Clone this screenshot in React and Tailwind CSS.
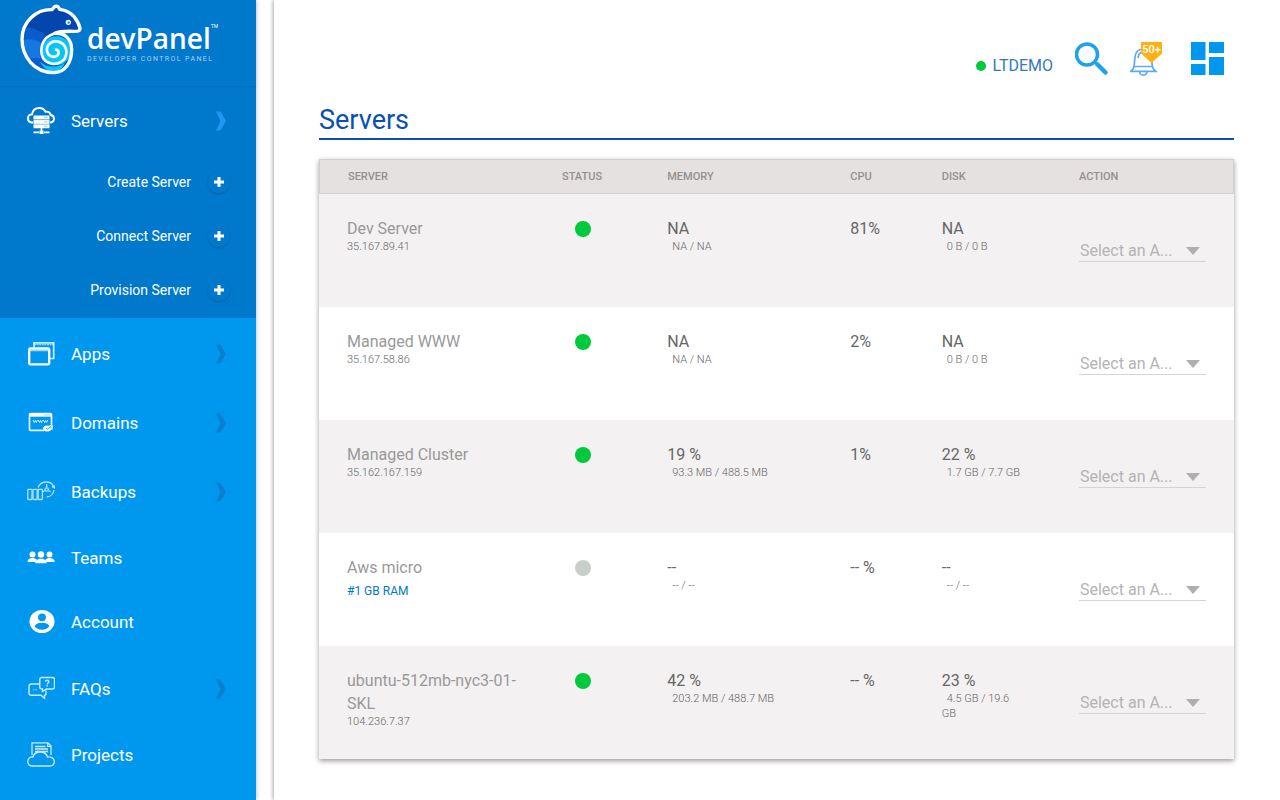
import React from "react";

const servers = [
  { name: "Dev Server", ip: "35.167.89.41", up: true, memory: "NA", memoryDetail: "NA / NA", cpu: "81%", disk: "NA", diskDetail: "0 B / 0 B" },
  { name: "Managed WWW", ip: "35.167.58.86", up: true, memory: "NA", memoryDetail: "NA / NA", cpu: "2%", disk: "NA", diskDetail: "0 B / 0 B" },
  { name: "Managed Cluster", ip: "35.162.167.159", up: true, memory: "19 %", memoryDetail: "93.3 MB / 488.5 MB", cpu: "1%", disk: "22 %", diskDetail: "1.7 GB / 7.7 GB" },
  { name: "Aws micro", plan: "#1 GB RAM", up: false, memory: "--", memoryDetail: "-- / --", cpu: "-- %", disk: "--", diskDetail: "-- / --" },
  { name: "ubuntu-512mb-nyc3-01-SKL", ip: "104.236.7.37", up: true, memory: "42 %", memoryDetail: "203.2 MB / 488.7 MB", cpu: "-- %", disk: "23 %", diskDetail: "4.5 GB / 19.6 GB" },
];

function Icon({ children }) {
  return (
    <svg viewBox="0 0 28 28" className="h-7 w-7 shrink-0" fill="none" stroke="white" aria-hidden="true">
      {children}
    </svg>
  );
}

const ServersIcon = () => (
  <Icon>
    <path d="M6 15.500H4.500C2 15 .8 13 1 11c.3-2.200 2-3.600 4-3.600C5.600 3.500 8.500 1 12.300 1c3 0 5 1.500 6.200 3.700 2.700-.4 4.700 1 5.200 3.300 2.300.5 3.500 2 3.300 4.200-.2 2-1.800 3.300-4 3.300" strokeWidth="1.900" />
    <path d="M6.500 8.500h16v4h-16zM6.500 12.900h16v4h-16zM6.500 17.300h16v4h-16z" fill="white" stroke="none" />
    <path d="M6.500 12.700h16M6.500 17.100h16" stroke="#7dbcea" strokeWidth=".6" />
    <path d="M17 10.500h3.500M17 14.900h3.500M17 19.300h3.500" stroke="#9ccdf0" />
    <path d="M14.500 21v4M6.500 25.300h5.500M17 25.300h5.500" strokeWidth="1.700" />
    <path d="M12.500 23.500h4V27h-4z" fill="white" stroke="none" />
  </Icon>
);

const AppsIcon = () => (
  <Icon>
    <path d="M7 7V2.800h19.700v15.700H22" strokeWidth="1.700" opacity=".8" />
    <path d="M7 4.600h19" strokeWidth="1.200" strokeDasharray="2 .6" opacity=".6" />
    <rect x="2.200" y="8.500" width="20" height="15.800" rx="1" strokeWidth="2.300" />
    <path d="M3 10.500h18.500" strokeWidth="1.500" opacity=".6" />
  </Icon>
);

const DomainsIcon = () => (
  <Icon>
    <path d="M17 21.300H3.500a1 1 0 0 1-1-1V5.500a1 1 0 0 1 1-1h20a1 1 0 0 1 1 1V16" strokeWidth="1.700" opacity=".9" />
    <path d="M2.500 4.300h22v3.400h-22z" fill="white" stroke="none" />
    <path d="M17.500 6h5.500" stroke="#5fbdf5" strokeDasharray="1.300 .6" />
    <path d="m6 11 1.200 2.500 1-2 1 2 1.200-2.500m.8 0 1.200 2.500 1-2 1 2 1.200-2.500m.8 0 1.200 2.500 1-2 1 2 1.200-2.500" strokeWidth=".9" opacity=".85" />
    <ellipse cx="20" cy="19.500" rx="3.800" ry="3" fill="white" stroke="none" />
    <path d="m20 18.500 4.500-2M21 21.800l4-2 .3-3.500" strokeWidth="1.500" opacity=".9" />
    <path d="m18.900 19 1.500 1.200 3-2.500" stroke="#0098ee" strokeWidth=".9" />
  </Icon>
);

const BackupsIcon = () => (
  <Icon>
    <g strokeWidth="1.300" opacity=".7">
      <rect x=".8" y="11.300" width="4.200" height="10.200" rx=".5" />
      <rect x="6" y="11.300" width="4.200" height="10.200" rx=".5" />
      <rect x="11.200" y="11.300" width="4.200" height="10.200" rx=".5" />
      <path d="M11 9.500C12.500 6 15.500 4 19.300 4c3.700 0 6.700 2.200 7.600 5.500M27 12c-.8 4.300-3.500 6.700-7.300 7M25 8.500l2.300 1.500.5-2.700" />
      <circle cx="19.700" cy="11.500" r="1.700" />
      <path d="M19.700 6v3.500M18 12.500l-2.500 1.500M21.500 12.500l2 1.500" />
    </g>
  </Icon>
);

const TeamsIcon = () => (
  <Icon>
    <g fill="white" stroke="none">
      <circle cx="5.500" cy="10.500" r="3" />
      <circle cx="22.500" cy="10.500" r="3" />
      <path d="M.5 18c0-2.500 2-4 5-4 2 0 3.300.6 4.200 1.800L8.500 18zM27.700 18c0-2.500-2-4-5-4-2 0-3.300.6-4.200 1.800l1 2.200z" />
      <circle cx="14" cy="10.500" r="3.200" />
      <path d="M8.300 19.300c0-2.900 2.200-4.600 5.700-4.600s5.700 1.700 5.700 4.600z" />
    </g>
  </Icon>
);

const AccountIcon = () => (
  <Icon>
    <ellipse cx="15" cy="13.500" rx="12.500" ry="11.500" fill="white" stroke="none" />
    <circle cx="15" cy="9.300" r="3.900" fill="#0098ee" stroke="none" />
    <path d="M7.500 18.300c1-2.500 4-3.600 7.500-3.600s6.500 1.100 7.500 3.600c-1.700 2.200-4.300 3.400-7.500 3.400s-5.800-1.200-7.500-3.400z" fill="#0098ee" stroke="none" />
  </Icon>
);

const FaqsIcon = () => (
  <Icon>
    <g strokeWidth="1.400" opacity=".8">
      <path d="M14.800 2.500h10.700c1.300 0 2 .7 2 2V12c0 1.300-.7 2-2 2h-6.200l-3.800 2.500V14h-.7c-1.300 0-2-.7-2-2V4.500c0-1.300.7-2 2-2z" />
      <path d="M12.500 9H4.300C2.800 9 2 9.800 2 11.200v6.800c0 1.400.8 2.200 2.300 2.200H14l3.500 3v-3c1 0 1.500-.8 1.500-2v-3" />
      <path d="M18.500 6.700c.1-2 3.400-2 3.400 0 0 1.300-1.700 1.300-1.700 2.700M20.200 10.300v1.200" />
      <path d="M6 14.800h4.500" strokeDasharray="1 .5" opacity=".5" />
    </g>
  </Icon>
);

const ProjectsIcon = () => (
  <Icon>
    <g strokeWidth="1.300" opacity=".8">
      <path d="M5 14V1.800h16l3 3V14M20.700 1.800v3.500H24" />
      <path d="M8 5.500h10.500M8 8h13M8 10.500h13" />
      <path d="M5.500 25C2.500 25 .7 23 .8 20.500.9 17.500 3 15.700 6 16c.8-3.200 3.500-5 7.300-5 3.600 0 6.300 1.700 7.200 5 3.800-.4 6.800 1.200 6.800 4.500 0 2.700-2 4.500-4.800 4.500z" />
    </g>
  </Icon>
);

function Chevron({ active }) {
  return (
    <svg viewBox="0 0 10 20" className={`h-5 w-[10px] ${active ? "fill-[#2196f3]" : "fill-[#0a7fd0]"}`} aria-hidden="true">
      <path d="M0 .5h4.500L10 10l-5.500 9.500H0L4.500 10z" />
    </svg>
  );
}

function NavItem({ icon, label, arrow, active }) {
  return (
    <a href="#" className={`flex items-center pr-[30px] pl-[27px] text-white ${arrow ? "h-[69px]" : "h-16"}`}>
      {icon}
      <span className="ml-4 flex-1 text-[17px] leading-6">{label}</span>
      {arrow && <Chevron active={active} />}
    </a>
  );
}

function SubItem({ label }) {
  return (
    <a href="#" className="flex h-[54px] items-center justify-end gap-[17px] pr-[26px] text-[14px] text-white">
      {label}
      <span className="flex h-[22px] w-[22px] items-center justify-center rounded-full shadow-[0_1px_2px_rgba(0,0,0,0.2)]">
        <svg viewBox="0 0 10 10" className="h-[10px] w-[10px] fill-white" aria-hidden="true">
          <path d="M3.500 0h3v3.500H10v3H6.500V10h-3V6.500H0v-3h3.500z" />
        </svg>
      </span>
    </a>
  );
}

const BODY = "M134 20c6-4 12 0 15 8 16 2 32 9 43 22 9 11 16 25 18 35 0 9-7 9-18 9-24-1-44 0-58 6 28-2 51 15 51 49 0 38-20 70-55 69C72 217 36 170 36 118 36 64 80 27 126 29z";

function Logo() {
  return (
    <a href="#" className="flex h-[86px] items-start pt-1 pl-5 text-white shadow-[0_1px_2px_rgba(0,0,0,0.08)]">
      <svg viewBox="30 12 186 213" className="h-[71px] w-[62px] shrink-0" aria-hidden="true">
        <path d={BODY} fill="#0a5cc8" />
        <path d="M50 82C64 48 97 31 138 24c40 0 62 27 70 64 0 6-3 6-15 6-30-2-58 0-79 19-17-18-38-28-64-31z" fill="#0446ab" />
        <path d="M38 120c24-6 43-1 58 12-7 13-9 29-4 45-15-5-29-3-39 4-9-17-15-39-15-61z" fill="#1577e0" />
        <path d="M90 185c17 17 51 21 74 3-6 18-20 29-36 29-15-1-30-17-38-32z" fill="#08c8f8" />
        <circle cx="140" cy="152" r="43" fill="#08c5f7" />
        <path d="M140 99c-28 6-45 24-46 53 0 16 8 30 22 36" fill="none" stroke="white" strokeWidth="8" strokeLinecap="round" />
        <path d="M118 189c24 9 50-6 51-30 1-22-15-36-33-35-17 1-27 14-25 29 2 13 15 21 27 16 10-4 11-18 0-20" fill="none" stroke="white" strokeWidth="8" strokeLinecap="round" />
        <path d={BODY} fill="none" stroke="white" strokeWidth="10" strokeLinejoin="round" />
        <circle cx="175" cy="67" r="8" fill="white" />
        <circle cx="176" cy="68" r="4" fill="#08b9ec" />
      </svg>
      <span className="mt-[18px] ml-[5px] flex flex-col">
        <span className="flex items-start font-['Open_Sans',sans-serif] text-[28px] leading-8 font-semibold">
          devPanel
          <span className="font-['Roboto',sans-serif] text-[5px] leading-[8px] font-normal">TM</span>
        </span>
        <span className="text-[7px] leading-[10px] tracking-[0.2em] whitespace-nowrap text-[#a9d3f2]">DEVELOPER CONTROL PANEL</span>
      </span>
    </a>
  );
}

function Sidebar() {
  return (
    <aside className="w-64 shrink-0 bg-[#0098ee] shadow-[1px_0_4px_rgba(0,0,0,0.2)]">
      <nav aria-label="Main">
        <div className="mb-px bg-[#0078cc] pb-px">
          <Logo />
          <NavItem icon={<ServersIcon />} label="Servers" arrow active />
          <SubItem label="Create Server" />
          <SubItem label="Connect Server" />
          <SubItem label="Provision Server" />
        </div>
        <NavItem icon={<AppsIcon />} label="Apps" arrow />
        <NavItem icon={<DomainsIcon />} label="Domains" arrow />
        <NavItem icon={<BackupsIcon />} label="Backups" arrow />
        <NavItem icon={<TeamsIcon />} label="Teams" />
        <NavItem icon={<AccountIcon />} label="Account" />
        <NavItem icon={<FaqsIcon />} label="FAQs" arrow />
        <NavItem icon={<ProjectsIcon />} label="Projects" />
      </nav>
    </aside>
  );
}

function TopBar() {
  return (
    <header className="flex items-start justify-end pt-[42px] pr-[10px]">
      <a href="#" className="mt-3 flex items-center gap-[6px] text-[16px] leading-6 text-[#337ab7]">
        <span className="h-[10px] w-[10px] rounded-full bg-[#00c93c]" />
        LTDEMO
      </a>
      <button type="button" aria-label="Search" className="ml-[22px]">
        <svg viewBox="0 0 34 34" className="h-[34px] w-[34px]" fill="none" stroke="#1fa2e8" aria-hidden="true">
          <circle cx="12" cy="12.500" r="10.500" strokeWidth="3.500" />
          <path d="m19.500 20 3 3" strokeWidth="2.500" />
          <path d="m22.500 22.500 8 8" strokeWidth="4.500" strokeLinecap="round" />
        </svg>
      </button>
      <button type="button" aria-label="Notifications" className="relative ml-[21px]">
        <svg viewBox="0 0 34 34" className="h-[34px] w-[34px]" fill="none" stroke="#5aaaf5" strokeWidth="1.700" aria-hidden="true">
          <path d="M1 29.300h24.500c-2-1.500-3-3.300-3.300-6L21.500 15c-.4-5-3.500-8-8.200-8S5.500 10 5 15l-.8 8.300c-.2 2.700-1.200 4.500-3.200 6z" />
          <path d="M4 24.500h18.500M8 16c.3-3.300 1.800-5.500 4.500-6M9.500 29.500c.3 2.500 1.700 3.600 3.800 3.600s3.500-1.100 3.800-3.600" />
        </svg>
        <span className="absolute top-0 left-[11px] h-[21px] w-[21px] bg-[#ffb114] text-center text-[11px] leading-4 font-medium text-white [clip-path:polygon(0_0,100%_0,100%_55%,50%_100%,0_55%)]">50+</span>
      </button>
      <button type="button" aria-label="Dashboard" className="ml-[27px]">
        <svg viewBox="0 0 33 33" className="h-[33px] w-[33px] fill-[#0098ee]" aria-hidden="true">
          <path d="M0 0h14.500v18H0zM18 0h15v11H18zM0 22h14.500v11H0zM18 15h15v18H18z" />
        </svg>
      </button>
    </header>
  );
}

function Metric({ value, detail }) {
  return (
    <>
      <div className="text-[16px] leading-[21px] text-[#666]">{value}</div>
      <div className="indent-[5px] text-[11px] leading-[15px] font-light text-[#666]">{detail}</div>
    </>
  );
}

function ServerRow({ server }) {
  return (
    <tr className="h-[113px] align-top odd:bg-[#f3f1f2] even:bg-white">
      <td className="pt-[23px] pr-2 pl-7 text-[#999]">
        <div className="text-[16px] leading-[23px]">{server.name}</div>
        {server.ip && <div className="text-[11px] leading-[13px] font-light text-[#666]">{server.ip}</div>}
        {server.plan && <a href="#" className="block pt-1 text-[12px] leading-4 text-[#0078cc]">{server.plan}</a>}
      </td>
      <td className="px-6 pt-[27px]">
        <span
          role="img"
          aria-label={server.up ? "Online" : "Offline"}
          className={`ml-[17px] block h-4 w-4 rounded-full ${server.up ? "bg-[#00c93c]" : "bg-[#c8cfca]"}`}
        />
      </td>
      <td className="pt-6 pl-7">
        <Metric value={server.memory} detail={server.memoryDetail} />
      </td>
      <td className="pt-6 pl-7 text-[16px] leading-[21px] text-[#666]">{server.cpu}</td>
      <td className="px-7 pt-6">
        <Metric value={server.disk} detail={server.diskDetail} />
      </td>
      <td className="px-7 pt-[45px]">
        <div className="relative">
          <select
            aria-label={`Action for ${server.name}`}
            className="block h-[23px] w-full appearance-none border-b border-[#d5d3d4] bg-transparent pl-px text-[16px] text-[#b5b3b4]"
          >
            <option>Select an A...</option>
          </select>
          <svg viewBox="0 0 14 8" className="pointer-events-none absolute top-2 right-[6px] h-2 w-[14px] fill-[#b0aeaf]" aria-hidden="true">
            <path d="M0 0h14L7 8z" />
          </svg>
        </div>
      </td>
    </tr>
  );
}

function ServerTable() {
  return (
    <div className="mt-[19px] shadow-[0_2px_5px_rgba(0,0,0,0.4)]">
      <table className="w-full table-fixed border-separate border-spacing-0 text-left">
        <colgroup>
          <col className="w-[23.5%]" />
          <col className="w-[11.5%]" />
          <col className="w-[20%]" />
          <col className="w-[10%]" />
          <col className="w-[15%]" />
          <col className="w-[20%]" />
        </colgroup>
        <thead>
          <tr className="bg-[#e6e1e1] text-[11px] text-[#929090]">
            {["SERVER", "STATUS", "MEMORY", "CPU", "DISK", "ACTION"].map((title) => (
              <th key={title} scope="col" className="h-[35px] border-y border-[#d3cfcf] pt-[2px] pl-7 font-medium first:border-l last:border-r">{title}</th>
            ))}
          </tr>
        </thead>
        <tbody>
          {servers.map((server) => (
            <ServerRow key={server.name} server={server} />
          ))}
        </tbody>
      </table>
    </div>
  );
}

export default function App() {
  return (
    <div className="flex min-h-screen bg-white font-['Roboto',sans-serif]">
      <Sidebar />
      <main className="ml-[18px] min-w-0 flex-1 pr-[46px] pb-10 pl-[45px] shadow-[-1px_0_4px_rgba(0,0,0,0.35)]">
        <TopBar />
        <h1 className="mt-6 border-b-2 border-[#0a50b0] text-[27px] leading-9 text-[#0a50b0]">Servers</h1>
        <ServerTable />
      </main>
    </div>
  );
}
